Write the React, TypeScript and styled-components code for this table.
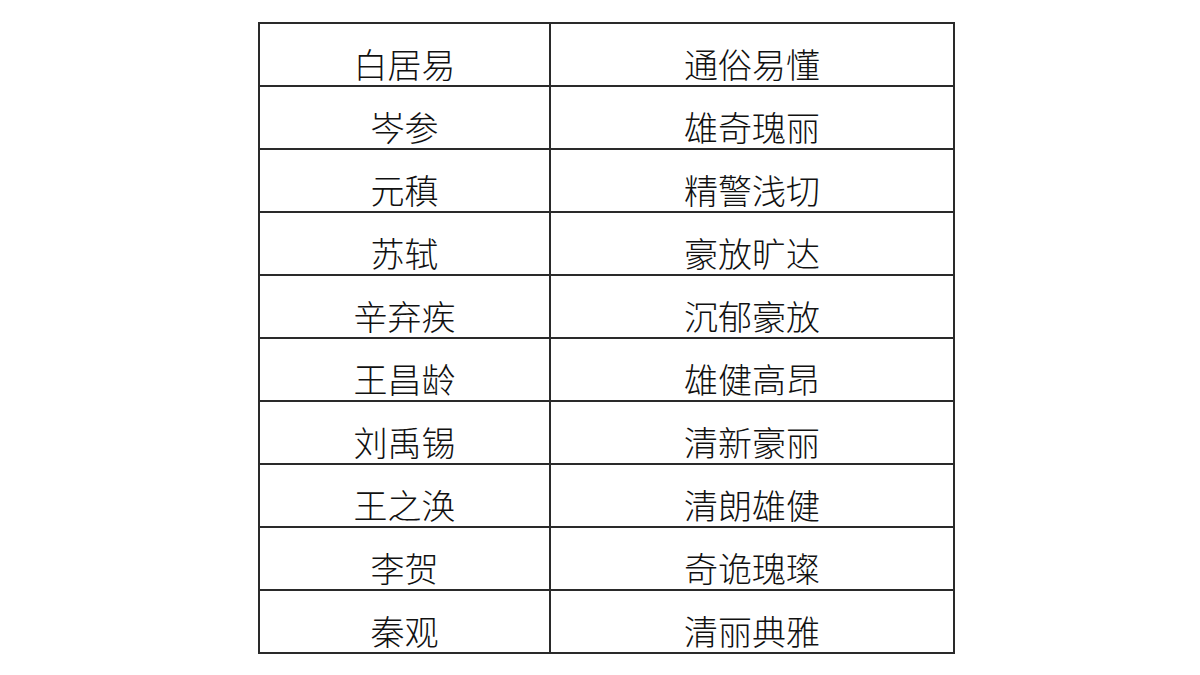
import React from 'react';
import styled, { createGlobalStyle } from 'styled-components';

type Poet = {
    name: string,
    style: string
}

const poets: Poet[] = [
    { name: '白居易', style: '通俗易懂' },
    { name: '岑参', style: '雄奇瑰丽' },
    { name: '元稹', style: '精警浅切' },
    { name: '苏轼', style: '豪放旷达' },
    { name: '辛弃疾', style: '沉郁豪放' },
    { name: '王昌龄', style: '雄健高昂' },
    { name: '刘禹锡', style: '清新豪丽' },
    { name: '王之涣', style: '清朗雄健' },
    { name: '李贺', style: '奇诡瑰璨' },
    { name: '秦观', style: '清丽典雅' },
];

const GlobalStyle = createGlobalStyle`
    html, body {
        margin: 0;
        padding: 0;
        background: #fff;
    }
    body {
        font-family: "Noto Sans CJK SC", "Noto Sans", sans-serif;
        color: #111;
    }
`

function App() {
    return (
        <>
            <GlobalStyle />
            <Page>
                <PoetTable>
                    <colgroup>
                        <col style={{ width: 291 }} />
                        <col style={{ width: 404 }} />
                    </colgroup>
                    <tbody>
                        {poets.map(p => (
                            <tr key={p.name}>
                                <Cell>{p.name}</Cell>
                                <Cell>{p.style}</Cell>
                            </tr>
                        ))}
                    </tbody>
                </PoetTable>
            </Page>
        </>
    );
}

const Page = styled.div`
    width: 1200px;
    height: 675px;
    box-sizing: border-box;
    padding: 22px 0 0 258px;
    overflow: hidden;
`

const PoetTable = styled.table`
    border-collapse: collapse;
    table-layout: fixed;
    width: 697px;
`

const Cell = styled.td`
    border: 2px solid #2a2a2a;
    height: 63px;
    box-sizing: border-box;
    padding: 23px 0 4px;
    text-align: center;
    vertical-align: top;
    font-size: 34px;
    line-height: 34px;
    font-weight: 300;
    white-space: nowrap;
`

export default App;
